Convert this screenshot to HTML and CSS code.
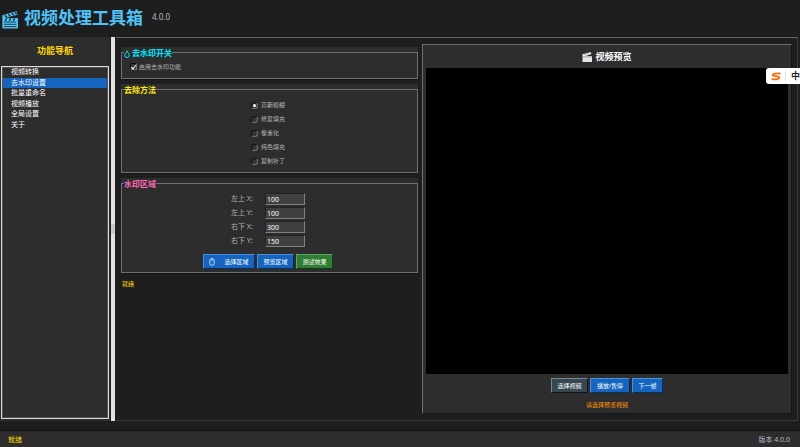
FILE: index.html
```html
<!DOCTYPE html>
<html>
<head>
<meta charset="utf-8">
<title>视频处理工具箱</title>
<link rel="stylesheet" href="styles.css">
</head>
<body>
<header class="header">
  <svg class="logo" viewBox="0 0 17 18" aria-hidden="true">
    <path fill="#4fc3f7" d="M.3 4.200 14.500.3l1 3.500L2.500 7H16v9.500a1 1 0 0 1-1 1H1.300a1 1 0 0 1-1-1z"/>
    <path stroke="#1e1e1e" stroke-width="1.200" fill="none" d="M2.800 4.200l2 1.900M6.300 3.200l2 1.900M9.800 2.300l2 1.900M13 1.400l1.600 1.700M4.700 7.300 3.200 9.600M8.700 7.300 7.200 9.600M12.700 7.300l-1.500 2.300"/>
    <path stroke="#1e1e1e" stroke-width=".8" fill="none" d="M2 11h12.300M2 13.300h12.300M2 15.600h12.300"/>
  </svg>
  <h1 class="title">视频处理工具箱</h1>
  <span class="version">4.0.0</span>
</header>
<main class="main">
  <aside class="sidebar">
    <h2 class="nav-title">功能导航</h2>
    <nav class="nav">
      <div class="nav-list">
        <a href="#convert">视频转换</a>
        <a href="#watermark" class="active" aria-current="page">去水印设置</a>
        <a href="#rename">批量重命名</a>
        <a href="#play">视频播放</a>
        <a href="#global">全局设置</a>
        <a href="#about">关于</a>
      </div>
    </nav>
  </aside>
  <div class="sash"><span class="grip"></span></div>
  <div class="workspace">
    <form class="settings">
      <div class="group">
        <fieldset>
          <legend class="cyan"><svg class="drop" viewBox="0 0 6 8" aria-hidden="true"><path fill="none" stroke="#00e5ff" d="M3 .9C2.200 2.600.8 3.800.8 5.300a2.200 2.200 0 0 0 4.400 0C5.200 3.800 3.800 2.600 3 .9z"/></svg>去水印开关</legend>
          <label class="check"><input type="checkbox" checked>启用去水印功能</label>
        </fieldset>
      </div>
      <div class="group">
        <fieldset>
          <legend class="yellow">去除方法</legend>
          <div class="methods">
            <label><input type="radio" name="method" checked>高斯模糊</label>
            <label><input type="radio" name="method">修复填充</label>
            <label><input type="radio" name="method">像素化</label>
            <label><input type="radio" name="method">纯色填充</label>
            <label><input type="radio" name="method">复制补丁</label>
          </div>
        </fieldset>
      </div>
      <div class="group">
        <fieldset>
          <legend class="pink">水印区域</legend>
          <div class="coords">
            <label for="x1">左上 X:</label><input id="x1" type="text" value="100">
            <label for="y1">左上 Y:</label><input id="y1" type="text" value="100">
            <label for="x2">右下 X:</label><input id="x2" type="text" value="300">
            <label for="y2">右下 Y:</label><input id="y2" type="text" value="150">
          </div>
          <div class="buttons">
            <button type="button" class="btn blue wide"><svg class="mouse" viewBox="0 0 6 8" aria-hidden="true"><path fill="none" stroke="#fff" stroke-width=".7" d="M.8 2.800a2.200 2.200 0 0 1 4.400 0v2.400a2.200 2.200 0 0 1-4.400 0zM3 .6v2.800"/></svg>选择区域</button>
            <button type="button" class="btn blue">预览区域</button>
            <button type="button" class="btn green">测试效果</button>
          </div>
        </fieldset>
      </div>
      <p class="state">就绪</p>
    </form>
    <section class="preview">
      <h2 class="preview-title"><svg class="clap" viewBox="0 0 10 10" aria-hidden="true"><path fill="#e6e6e6" d="M0 2.500 8.500 0l1 2L4 4h6v6H.5V4z"/><path stroke="#777" stroke-width=".6" d="M2.500 1.800 4 3.400M5.500 1 7 2.500M.5 4.800H10"/></svg>视频预览</h2>
      <div class="screen"></div>
      <div class="buttons">
        <button type="button" class="btn slate">选择视频</button>
        <button type="button" class="btn blue">播放/暂停</button>
        <button type="button" class="btn blue short">下一帧</button>
      </div>
      <p class="hint">请选择预览视频</p>
    </section>
  </div>
</main>
<footer class="footer"><span class="ready">就绪</span><span class="release">版本 4.0.0</span></footer>
<div class="ime"><svg class="sogou" viewBox="0 0 11 9" aria-hidden="true"><path fill="none" stroke="#ff6a00" stroke-width="2" stroke-linecap="round" stroke-linejoin="round" d="M9.700 1.200C5 .9 1.500 1.600 1.800 3.200c.3 1.300 7 .5 7.300 2.300C9.300 7.300 5 8 1.300 7.400"/></svg><span class="lang">中</span></div>
</body>
</html>
```
FILE: styles.css
```css
* { box-sizing: border-box; }

body {
  margin: 0;
  height: 100vh;
  display: flex;
  flex-direction: column;
  overflow: hidden;
  background: #1e1e1e;
  color: #b4b4b4;
  font: 6px/10px "Noto Sans", "Noto Sans CJK SC", sans-serif;
}

h1, h2, p { margin: 0; }

input, button { font: inherit; margin: 0; }

.header {
  display: flex;
  height: 37px;
  padding: 0 2px;
}

.logo {
  width: 17px;
  height: 18px;
  margin: 11px 5px 0 0;
}

.title {
  color: #4fc3f7;
  font-size: 17px;
  line-height: 36px;
}

.version {
  margin-left: 9px;
  color: #b0bec5;
  font-size: 8px;
  line-height: 34px;
}

.main {
  flex: 1;
  min-height: 0;
  display: flex;
  margin: 0 2px 9px 0;
}

.sidebar {
  width: 110px;
  display: flex;
  flex-direction: column;
  background: #2d2d2d;
  padding: 0 1px 2px;
}

.nav-title {
  height: 29px;
  color: #ffd700;
  font-size: 9px;
  line-height: 27px;
  text-align: center;
}

.nav {
  flex: 1;
  border: 1px solid #dcdad5;
  outline: 1px solid #55534f;
  outline-offset: -2px;
}

.nav-list {
  display: grid;
  grid-auto-rows: 1fr;
  height: 63px;
}

.nav a {
  margin: 0 1px;
  padding-left: 8px;
  color: #fff;
  font-size: 7px;
  line-height: 10px;
  text-decoration: none;
}

.nav .active { background: #1565c0; }

.sash {
  width: 4px;
  margin: 0 1px;
  display: flex;
  align-items: center;
  background: #e4e2de;
}

.sash .grip {
  width: 100%;
  height: 10px;
  background: #cbc8c3;
}

.workspace {
  flex: 1;
  min-width: 0;
  display: grid;
  grid-template-columns: 297fr 370fr;
  gap: 4px;
  padding: 6px 5px;
  border: 1px solid #3a3a3a;
  border-top-color: #666;
  border-left: 0;
}

.settings {
  min-width: 0;
  display: flex;
  flex-direction: column;
  gap: 5px;
  padding-top: 3px;
}

.group { background: #2d2d2d; }

fieldset {
  min-width: 0;
  margin: 0;
  padding: 0 7px 0 4px;
  border: 1px solid #707070;
  box-shadow: 0 1px #151515;
}

legend {
  display: flex;
  margin-left: -2px;
  padding: 0;
  font-size: 8px;
  font-weight: bold;
  line-height: 11px;
}

.cyan { color: #00e5ff; }
.yellow { color: #ffeb00; }
.pink { color: #ff69b4; }

.drop {
  width: 6px;
  height: 8px;
  margin: 3px 2px 0 0;
}

.check {
  display: flex;
  align-items: center;
  gap: 2px;
  padding: 0 4px 3px;
  height: 20px;
}

input[type="checkbox"], input[type="radio"] {
  appearance: none;
  display: grid;
  place-items: center;
  width: 7px;
  height: 7px;
  border: 1px solid;
  border-color: #111 #777 #777 #111;
  background: #353535;
}

input[type="radio"] {
  border-radius: 50%;
}

input[type="checkbox"]:checked::before {
  content: "";
  width: 2px;
  height: 4px;
  border: solid #fff;
  border-width: 0 1px 1px 0;
  transform: rotate(40deg);
}

input[type="radio"]:checked::before {
  content: "";
  width: 3px;
  height: 3px;
  border-radius: 50%;
  background: #fff;
}

.methods {
  display: grid;
  justify-content: center;
  padding: 3px 0 4px;
}

.methods label {
  display: flex;
  align-items: center;
  gap: 3px;
  height: 14px;
}

.coords {
  display: grid;
  grid-template-columns: 34px 40px;
  row-gap: 2px;
  justify-content: center;
  align-items: center;
  padding: 4px 0 7px;
  font-size: 7px;
}

.coords input {
  width: 40px;
  height: 12px;
  padding: 0 1px;
  border: 1px solid;
  border-color: #222 #808080 #808080 #222;
  background: #404040;
  color: #fff;
}

.buttons {
  display: flex;
  justify-content: center;
  gap: 2px;
}

.group .buttons { margin-bottom: 3px; }

.btn {
  width: 37px;
  height: 15px;
  padding: 0;
  border: 1px solid;
  color: #fff;
  line-height: 12px;
  white-space: nowrap;
}

.blue { background: #1565c0; border-color: #4a90dc #0a2d58 #0a2d58 #4a90dc; }
.green { background: #2e7d32; border-color: #60a564 #123814 #123814 #60a564; }
.slate { background: #37474f; border-color: #78868d #10171a #10171a #78868d; }

.wide {
  display: flex;
  justify-content: center;
  align-items: center;
  gap: 9px;
  width: 52px;
}

.mouse { width: 6px; height: 8px; }

.state {
  padding: 1px;
  color: #ffd700;
}

.preview {
  min-width: 0;
  display: flex;
  flex-direction: column;
  padding: 0 3px;
  border: 1px solid;
  border-color: #707070 #151515 #151515 #707070;
  background: #2d2d2d;
}

.preview-title {
  display: flex;
  justify-content: center;
  align-items: center;
  gap: 3px;
  height: 23px;
  color: #fff;
  font-size: 9px;
}

.clap { width: 10px; height: 10px; }

.screen {
  flex: 1;
  margin-bottom: 4px;
  background: #000;
}

.preview .btn:nth-child(2) { width: 40px; }
.preview .short { width: 31px; }

.hint {
  padding: 7px 0 3px;
  color: #ff9800;
  text-align: center;
}

.footer {
  display: flex;
  justify-content: space-between;
  height: 17px;
  padding: 0 10px 0 8px;
  border-top: 1px solid #111;
  background: #2d2d2d;
  font-size: 7px;
  line-height: 18px;
}

.ready { color: #ffd700; }

.release { color: #b0bec5; }

.ime {
  position: absolute;
  top: 68px;
  right: 0;
  display: flex;
  align-items: center;
  width: 34px;
  height: 16px;
  padding-left: 5px;
  overflow: hidden;
  border-radius: 3px 0 0 3px;
  background: #fff;
}

.sogou { flex: none; width: 10px; height: 9px; }

.lang {
  margin-left: 4px;
  padding-left: 5px;
  border-left: 1px solid #ddd;
  color: #222;
  font-size: 9px;
  font-weight: bold;
}
```
